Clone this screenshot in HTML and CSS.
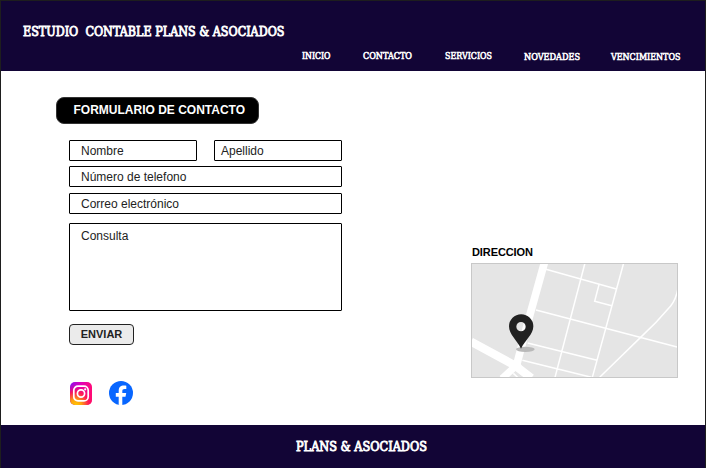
FILE: index.html
```
<!DOCTYPE html>
<html lang="es">
<head>
<meta charset="utf-8">
<title>Estudio Contable Plans &amp; Asociados</title>
<link rel="stylesheet" href="styles.css">
</head>
<body>
<div class="page">
  <header class="header">
    <svg class="brand" width="264" height="20"><text x="0" y="15" textLength="261.5" lengthAdjust="spacingAndGlyphs" xml:space="preserve">ESTUDIO  CONTABLE PLANS &amp; ASOCIADOS</text></svg>
    <nav class="nav">
      <svg width="29" height="14"><text x="0" y="10" textLength="28.5" lengthAdjust="spacingAndGlyphs">INICIO</text></svg>
      <svg width="49" height="14"><text x="0" y="10" textLength="49" lengthAdjust="spacingAndGlyphs">CONTACTO</text></svg>
      <svg width="47" height="14"><text x="0" y="10" textLength="47" lengthAdjust="spacingAndGlyphs">SERVICIOS</text></svg>
      <svg class="low" width="56" height="14"><text x="0" y="10" textLength="56" lengthAdjust="spacingAndGlyphs">NOVEDADES</text></svg>
      <svg class="low" width="70" height="14"><text x="0" y="10" textLength="69.5" lengthAdjust="spacingAndGlyphs">VENCIMIENTOS</text></svg>
    </nav>
  </header>
  <main class="main">
    <section class="contact">
      <h1 class="title">FORMULARIO DE CONTACTO</h1>
      <form class="form">
        <div class="names">
          <div class="field">Nombre</div>
          <div class="field last-name">Apellido</div>
        </div>
        <div class="field phone">Número de telefono</div>
        <div class="field mail">Correo electrónico</div>
        <div class="field message">Consulta</div>
        <button class="send" type="button">ENVIAR</button>
      </form>
      <div class="social">
        <svg width="22" height="23" viewBox="0 0 22 23">
          <defs>
            <linearGradient id="ig" x1="0" y1="0" x2="1" y2="0.15"><stop offset="0" stop-color="#8a10ee"/><stop offset=".5" stop-color="#e000b8"/><stop offset="1" stop-color="#ff0a78"/></linearGradient>
            <radialGradient id="glow" cx=".25" cy="1.05" r=".95"><stop offset="0" stop-color="#ffd000"/><stop offset=".3" stop-color="#ffa010"/><stop offset=".65" stop-color="#ff1950" stop-opacity=".9"/><stop offset="1" stop-color="#ff0080" stop-opacity="0"/></radialGradient>
          </defs>
          <rect width="22" height="23" rx="5" fill="url(#ig)"/>
          <rect width="22" height="23" rx="5" fill="url(#glow)"/>
          <g fill="none" stroke="#fff" stroke-width="1.7"><rect x="3.8" y="4.1" width="14.4" height="14.8" rx="4.2"/><circle cx="11" cy="11.5" r="3.6"/></g>
          <circle cx="15.2" cy="7.3" r="1.1" fill="#fff"/>
        </svg>
        <svg width="24" height="24" viewBox="0 0 24 24">
          <circle cx="12" cy="12" r="12" fill="#0866ff"/>
          <path d="M9.7 23.8v-8.1H6.8v-3.6h2.9v-1.8c0-4.2 1.9-5.8 5.3-5.8.9 0 1.8.1 2.3.3v3.2h-1.5c-1.9 0-2.5.7-2.5 2.4v1.7h3.9l-.7 3.6h-3.2v8.2a12 12 0 0 1-3.6-.1z" fill="#fff"/>
        </svg>
      </div>
    </section>
    <section class="location">
      <h2 class="label">DIRECCION</h2>
      <svg class="map" width="207" height="115" viewBox="33 69 621 345">
        <rect x="34.5" y="70.5" width="618" height="342" fill="#e5e5e5"/>
        <g fill="none" stroke="#fff" stroke-width="4.5">
          <path d="M255 87L469 147M228 210L654 322M203 309L411 361M187 361L394 412M375 69L285 412M491 69L397 412M417 134L404 184L455 197M654 145Q648 178 632 198Q590 248 541 293L419 412"/>
          <path d="M253 69L204 245L166 390" stroke-width="23"/>
          <path d="M33 305L166 377L214 414" stroke-width="25"/>
          <path d="M178 368L126 416" stroke-width="21"/>
          <path d="M160 400L175 414"/>
        </g>
        <ellipse cx="196" cy="328" rx="28" ry="8" fill="#b9b9b9"/>
        <path fill-rule="evenodd" d="M183 326C171 301 147 283 147 259a36 36 0 0 1 73 0C220 283 195 301 183 326zM183 246a14 14 0 1 0 0 28a14 14 0 1 0 0-28z" fill="#222"/>
        <rect x="34.5" y="70.5" width="618" height="342" fill="none" stroke="#c8c8c8" stroke-width="3"/>
      </svg>
    </section>
  </main>
  <footer class="footer">
    <svg width="132" height="20"><text x="0" y="15" textLength="131" lengthAdjust="spacingAndGlyphs">PLANS &amp; ASOCIADOS</text></svg>
  </footer>
</div>
</body>
</html>
```
FILE: styles.css
```
* { box-sizing: border-box; }
body { margin: 0; font-family: "Liberation Sans", Arial, sans-serif; font-size: 12px; color: #222; }
svg { display: block; flex: none; overflow: visible; }
.page { height: 468px; display: flex; flex-direction: column; border: 1px solid #1e1e1e; border-bottom: 0; background: #fff; overflow: hidden; }
.header { height: 70px; flex: none; background: #120536; padding: 20px 0 0 21.5px; }
.header text, .footer text { font-family: "DejaVu Serif", serif; font-size: 13px; fill: #fff; stroke: #fff; stroke-width: 0.9px; }
.header .nav text { font-size: 9.3px; stroke-width: 0.6px; }
.nav { display: flex; margin: 8px 0 0 279px; }
.nav svg + svg { margin-left: 32.7px; }
.nav svg.low { margin: 1px 0 0 32px; }
.nav svg.low + svg.low { margin-left: 31px; }
.main { flex: 1; display: flex; justify-content: space-between; padding: 26px 27px 0 55px; }
.contact { width: 286px; }
.title { width: 203px; height: 27px; margin: 0; padding-left: 16.5px; border: 1px solid #333; border-radius: 8px; background: #000; color: #fff; font-size: 12px; line-height: 24px; white-space: nowrap; }
.form { margin: 16px 0 0 13px; }
.names { display: flex; gap: 17px; }
.names .field { width: 128px; }
.field { height: 21px; padding-left: 11px; border: 1px solid #000; border-radius: 1px; line-height: 20px; }
.names .last-name { padding-left: 6px; }
.phone { margin-top: 5px; }
.mail { margin-top: 6px; }
.message { height: 88px; margin-top: 9px; padding-top: 2px; }
.send { display: block; width: 65px; height: 21px; margin-top: 13px; padding: 0; border: 1px solid #222; border-radius: 4px; background: #ebebeb; color: #222; font: bold 11px/19px "Liberation Sans", Arial, sans-serif; }
.social { display: flex; align-items: center; gap: 17px; margin: 36px 0 0 14px; }
.location { padding-top: 148px; }
.label { margin: 0 0 4px 1px; color: #000; font-size: 11px; line-height: 14px; letter-spacing: -0.1px; }
.footer { height: 43px; flex: none; display: flex; justify-content: center; padding: 11px 0 0 18px; background: #120536; }
```
